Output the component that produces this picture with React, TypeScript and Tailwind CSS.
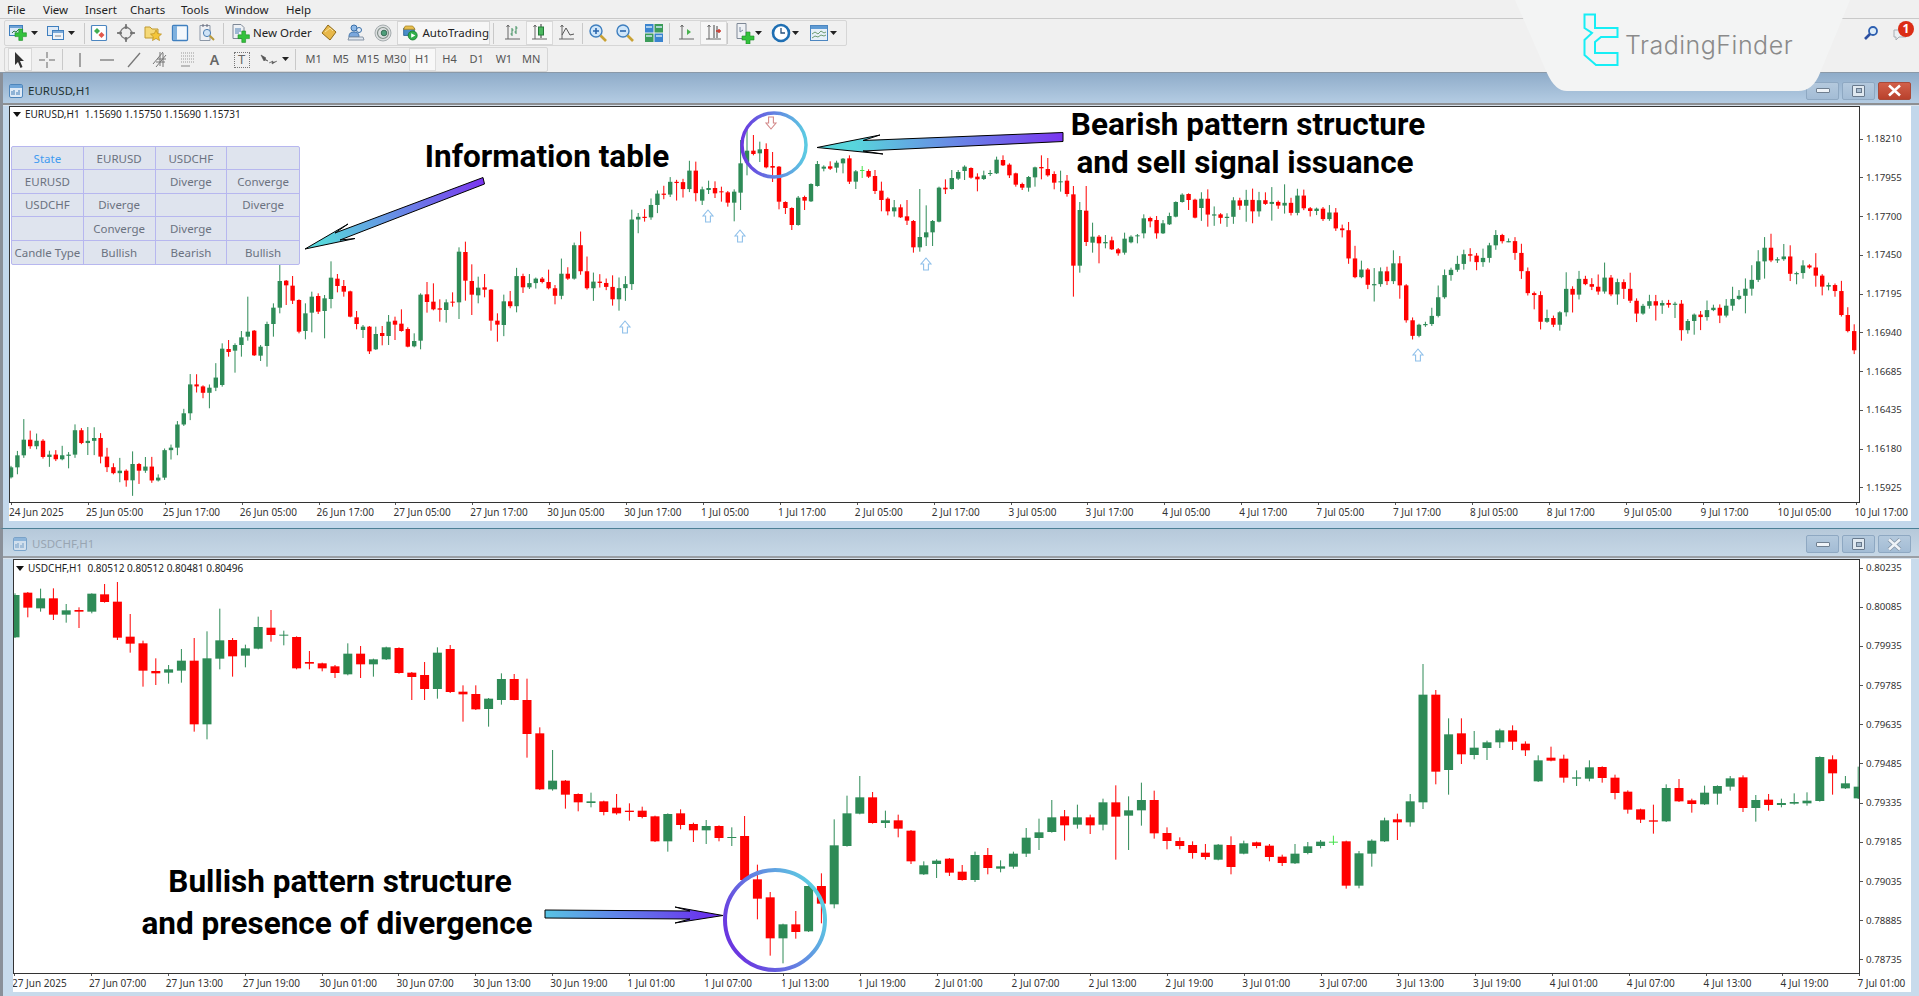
import React from "react";

type C = [number, number, number, number, number];
const RED = "#ff0000", GRN = "#2e8b57", LIM = "#44e04a";

// ---------- bottom chart candles (t, bodyTop, bodyBot, wickTop, wickBot) ----------
const b1: C[] = [[1,75,202,70,204],[0,68,113,66,142],[1,85,115,56,125],[0,85,134,55,150],[1,121,134,102,158],[0,120,125,112,174],[1,71,125,70,130],[0,73,96,42,98],[0,95,203,36,210],[0,200,221,132,248],[0,220,302,212,350],[0,303,310,265,345],[1,298,308,285,341],[1,272,302,237,338],[0,272,463,204,485],[1,265,463,184,508],[1,211,266,116,298],[0,210,259,204,320],[1,235,257,224,292],[1,171,236,140,238],[0,173,195,120,215],[1,194,197,182,226],[0,201,295,199,298],[0,276,281,243,298],[0,280,295,278,304],[0,289,309,285,324],[1,251,313,220,316],[0,251,283,228,324],[1,268,283,266,320],[1,232,268,230,270],[0,234,309,232,311],[0,308,321,306,390],[0,315,357,276,390],[1,248,357,232,386],[0,237,366,225,369],[0,365,373,346,455],[0,372,418,346,420],[1,386,417,384,470],[1,327,390,310,404],[0,327,390,312,391],[0,390,492,326,563],[0,490,658,472,660],[1,632,658,540,662],[0,632,674,630,716],[0,672,697,670,724],[1,694,699,668,712],[0,694,726,692,736],[0,713,730,672,734],[0,722,726,700,752],[0,722,741,710,745]];
const b2: C[] = [[0,529,604,527,606],[1,522,604,520,635],[0,520,555,508,568],[0,552,571,548,606],[1,558,571,540,612],[0,558,594,556,604],[1,591,594,562,618],[0,588,720,528,722],[0,718,776,674,838],[0,772,895,756,947],[1,853,895,851,970],[0,853,876,813,896],[1,738,874,736,876],[0,738,791,700,850],[1,616,793,538,805],[1,520,618,467,620],[1,472,521,408,523],[0,472,549,456,551],[1,541,549,512,564],[0,541,566,524,592],[0,572,664,570,672],[1,676,703,664,705],[1,662,672,658,714],[0,656,698,654,708],[0,695,720,675,722],[1,645,720,635,726],[0,645,684,624,703],[1,679,686,661,697],[1,641,680,635,686],[1,593,641,564,651],[1,577,594,536,630],[1,532,576,480,578],[0,529,556,510,602],[1,532,554,494,566],[0,532,556,524,582],[1,487,554,476,571],[0,487,530,436,659],[1,511,527,469,630],[1,480,511,428,557],[0,480,580,452,596],[0,579,603,562,628],[0,603,618,592,628],[0,615,639,604,656],[0,638,651,612,659],[1,614,659,612,661],[0,615,681,589,703],[1,610,641,602,643],[0,607,618,605,625],[0,617,651,612,664],[0,650,669,644,678],[1,641,670,612,672],[1,619,639,606,643],[1,605,618,600,625],[2,605,607,587,615],[0,604,737,602,746],[1,640,737,633,745],[1,602,641,598,680],[1,541,604,533,606],[0,538,547,521,600],[1,484,547,462,560],[1,164,487,72,507],[0,164,395,150,433],[1,283,390,235,464],[0,280,343,235,372],[1,323,345,273,358],[1,307,324,302,360],[1,271,307,266,324],[0,271,305,256,330],[0,311,331,304,348],[1,361,424,346,426],[0,353,362,320,364],[0,356,413,344,428],[1,412,416,391,438],[1,382,416,361,424],[0,381,414,379,428],[0,413,459,404,478],[0,455,509,451,521],[0,508,539,506,549],[0,541,545,494,581],[1,444,544,433,546],[0,444,484,417,486],[0,481,492,476,518],[1,458,493,437,495],[1,438,461,436,494],[1,415,440,408,452],[0,412,504,406,516],[1,480,504,465,545],[0,479,495,462,512],[1,489,495,476,502],[1,486,491,460,494],[1,482,490,457,497],[1,351,483,349,485],[0,358,400,346,464],[1,430,445,408,447],[1,440,475,380,477]];

// ---------- top chart candles ----------
const t1: C[] = [[1,656,765,640,770],[0,657,666,630,680],[1,645,662,640,728],[1,622,645,603,680],[1,605,620,500,632],[0,602,676,600,678],[1,650,677,645,693],[1,582,648,575,710],[1,533,582,520,620],[1,453,533,405,550],[0,452,466,450,525],[0,467,512,438,522],[0,510,605,508,610],[1,550,603,520,628],[1,500,548,485,607],[0,498,545,490,552],[1,505,543,495,625],[1,443,507,394,535],[0,446,468,432,487],[0,468,485,450,500],[0,484,560,482,562],[0,562,582,543,598],[1,590,600,585,624],[0,590,664,588,672],[1,612,658,590,660],[0,609,618,588,646],[1,575,618,555,645],[0,572,584,560,630],[0,581,603,538,605],[0,597,650,592,652],[1,633,649,610,652],[1,494,632,490,658],[0,493,516,456,548],[0,515,538,460,541],[0,535,539,508,575],[1,517,540,508,578],[0,515,518,487,530],[1,365,517,352,567],[0,366,452,335,512],[0,453,494,403,555],[1,473,496,440,520],[0,472,479,432,502],[0,479,572,477,602],[0,572,584,550,635]];
const t2: C[] = [[1,298,332,290,345],[1,294,300,272,312],[0,294,310,274,324],[0,304,307,290,335],[0,307,338,303,350],[1,305,338,298,394],[1,220,308,150,360],[1,182,218,120,256],[0,182,192,135,196],[1,178,190,155,216],[0,177,232,160,235],[0,228,233,186,276],[0,230,335,228,358],[0,336,354,334,372],[0,354,405,352,420],[1,323,405,318,407],[0,321,332,317,360],[1,282,334,280,336],[1,222,288,213,290],[1,230,236,226,244],[0,229,236,214,240],[1,218,233,212,248],[1,206,220,204,250],[0,205,275,196,282],[1,244,275,240,297],[2,240,242,228,264],[0,243,260,238,264],[0,258,303,240,312],[0,302,330,275,364],[0,326,364,322,376],[1,352,364,330,380],[0,352,382,343,384],[0,379,392,330,405],[0,393,472,390,488],[1,441,472,297,485],[1,427,442,346,468],[1,393,427,390,468],[1,293,395,290,397],[0,293,298,268,312],[1,264,297,240,299],[1,246,266,240,270],[1,230,243,226,270],[0,234,263,232,266],[0,260,268,250,304],[1,256,267,242,270],[1,249,252,240,258],[1,209,250,200,252],[0,210,226,196,228],[0,224,256,220,264],[0,250,284,248,290],[0,282,293,278,300],[1,261,293,258,305],[1,232,262,230,290],[0,231,235,196,268],[0,237,256,204,260],[0,252,278,244,298],[1,274,276,242,305],[0,272,312,255,320],[0,313,527,288,620],[1,360,527,336,548],[0,362,456,288,468],[1,440,458,398,488],[0,440,460,435,520],[1,456,460,435,475],[0,451,478,440,480],[0,478,490,474,497],[1,446,488,428,494],[1,440,457,436,460],[1,436,438,432,460],[1,385,430,373,445],[0,384,394,380,412],[0,390,430,378,446],[1,400,430,390,432],[1,378,403,368,405],[1,336,380,334,382],[1,314,336,310,338],[0,312,330,310,360],[0,329,383,326,385]];

type K = [number, number];
function gen(from: number, to: number, keys: K[], seed: number, startOpen?: number) {
  const out: { n: number; c: C }[] = [];
  let s = seed;
  const rnd = () => { s = (s * 16807) % 2147483647; return s / 2147483647; };
  const at = (x: number) => {
    for (let i = 1; i < keys.length; i++) {
      if (x <= keys[i][0] * 1.2239) {
        const a = keys[i - 1], b = keys[i];
        const f = (x - a[0] * 1.2239) / ((b[0] - a[0]) * 1.2239);
        return (a[1] + (b[1] - a[1]) * Math.max(0, f)) * 1.2239;
      }
    }
    return keys[keys.length - 1][1] * 1.2239;
  };
  let open = startOpen ?? at(11 + 6.4 * from);
  for (let n = from; n <= to; n++) {
    const close = at(11 + 6.4 * n) + (rnd() - 0.5) * 20;
    const top = Math.min(open, close), bot = Math.max(open, close);
    const up = close < open;
    const c: C = [up ? 1 : 0, top, Math.max(bot, top + 1.2), top - rnd() * rnd() * 20 - 1, bot + rnd() * rnd() * 20 + 1];
    out.push({ n, c });
    open = close;
  }
  return out;
}

const k0: K[] = [[9,390],[16,358],[25,360],[40,378],[52,380],[60,360],[70,355],[80,370],[95,385],[110,385],[125,392],[135,375],[145,350],[155,315],[170,318],[177,315]];
const k1: K[] = [[410,258],[420,235],[430,225],[440,235],[450,240],[465,225],[470,205],[478,235],[490,235],[500,238],[510,245],[516,180],[525,175],[535,165],[550,155],[565,145],[570,155]];
const k2: K[] = [[981,170],[1000,170],[1020,165],[1040,168],[1060,165],[1075,175],[1095,180],[1105,215],[1115,232],[1130,225],[1140,215],[1150,270],[1160,265],[1175,250],[1185,215],[1200,210],[1215,210],[1228,190],[1240,215],[1250,235],[1262,270],[1272,255],[1282,235],[1300,232],[1320,235],[1335,255],[1350,240],[1365,250],[1378,270],[1395,255],[1415,245],[1435,225],[1442,208],[1460,215],[1480,225],[1495,228],[1502,250],[1510,265],[1516,300]];

function Candle({ x, w, c }: { x: number; w: number; c: C }) {
  const col = c[0] === 0 ? RED : c[0] === 1 ? GRN : LIM;
  return (
    <g>
      <line x1={x} x2={x} y1={c[3]} y2={c[4]} stroke={col} strokeWidth={1} />
      <rect x={x - w / 2} y={c[1]} width={w} height={Math.max(c[2] - c[1], 1)} fill={col} />
    </g>
  );
}

const shift = (a: C[], off: number): C[] => a.map(c => [c[0], off + c[1] / 3, off + c[2] / 3, off + c[3] / 3, off + c[4] / 3]);

function TopCandles() {
  const x = (n: number) => 11 + 6.4 * n;
  const all: { n: number; c: C }[] = [
    ...gen(0, 32, k0, 77),
    ...shift(t1, 130).map((c, i) => ({ n: 33 + i, c })),
    ...gen(77, 107, k1, 991, 325),
    ...shift(t2, 90).map((c, i) => ({ n: 108 + i, c })),
    ...gen(186, 288, k2, 4242, 208),
  ];
  return <>{all.map(o => <Candle key={o.n} x={x(o.n)} w={4.4} c={o.c} />)}</>;
}
function BottomCandles() {
  const x = (n: number) => 15 + 12.8 * n;
  const all = [...shift(b1, 570), ...shift(b2, 640)];
  return <>{all.map((c, i) => <Candle key={i} x={x(i)} w={9} c={c} />)}</>;
}

const UpA = ({ x, y }: { x: number; y: number }) => (
  <path d={`M${x} ${y - 6}L${x + 5} ${y}H${x + 2.4}V${y + 6}H${x - 2.4}V${y}H${x - 5}Z`} fill="#fff" stroke="#8fc0ea" strokeWidth={1.1} />
);
const DnA = ({ x, y }: { x: number; y: number }) => (
  <path d={`M${x} ${y + 6}L${x + 5} ${y}H${x + 2.4}V${y - 6}H${x - 2.4}V${y}H${x - 5}Z`} fill="#fff" stroke="#d48a8a" strokeWidth={1.1} />
);

// ---------- toolbar icons ----------
const S = ({ children, w = 20, h = 20 }: { children: React.ReactNode; w?: number; h?: number }) => (
  <svg width={w} height={h} viewBox={`0 0 ${w} ${h}`}>{children}</svg>
);
const Plus = ({ x, y, s = 4 }: { x: number; y: number; s?: number }) => (
  <path d={`M${x + s} ${y}h${s}v${s}h${s}v${s}h-${s}v${s}h-${s}v-${s}h-${s}v-${s}h${s}z`} fill="#33c23c" stroke="#1c8c25" strokeWidth={0.6} />
);
const Dd = () => (
  <svg width="8" height="5" viewBox="0 0 8 5"><path d="M0 0h7L3.500 4z" fill="#222" /></svg>
);
const Axes = ({ c = "#666" }: { c?: string }) => (
  <path d="M5 2v14M2 16h15M5 2l-1.500 2M5 2l1.500 2" fill="none" stroke={c} strokeWidth={1} />
);
const IcoNew = () => <S><rect x="1.500" y="2.500" width="13" height="10" fill="#d9e8f7" stroke="#3f7fbf" /><rect x="2" y="3" width="12" height="2" fill="#6fa3d6" /><path d="M4 10l2-2 2 1 3-3" fill="none" stroke="#2e7d46" /><Plus x={7} y={6} s={3.800} /></S>;
const IcoProfile = () => <S><rect x="1.500" y="3.500" width="11" height="9" fill="#dfeaf6" stroke="#3f7fbf" /><rect x="6.500" y="7.500" width="11" height="9" fill="#eef4fb" stroke="#3f7fbf" /><rect x="7" y="8" width="10" height="2" fill="#7aa9d8" /><path d="M9 13h6" stroke="#888" /></S>;
const IcoMarket = () => <S><rect x="2.500" y="2.500" width="15" height="15" rx="1" fill="#fff" stroke="#4c86c0" strokeWidth="1.200" /><path d="M8 5l3 3-3 3-3-3z" fill="#3fae52" /><path d="M12.500 9l3 3-3 3-3-3z" fill="#e2584c" /></S>;
const IcoCompass = () => <S><circle cx="10" cy="10" r="5.500" fill="#eee" stroke="#777" strokeWidth="1.300" /><path d="M10 1v5M10 14v5M1 10h5M14 10h5" stroke="#666" strokeWidth="1.400" /><path d="M10 1.500l2 3h-4zM10 18.500l2-3h-4zM1.500 10l3-2v4zM18.500 10l-3-2v4z" fill="#777" /></S>;
const IcoFolder = () => <S><path d="M2 4h5l2 2h6v9H2z" fill="#f5d978" stroke="#c09a30" /><path d="M13 7l1.700 3.600 3.800.5-2.800 2.600.8 3.800-3.500-2-3.500 2 .8-3.800-2.800-2.600 3.800-.5z" fill="#f4c63a" stroke="#b98c1c" strokeWidth=".7" /></S>;
const IcoNav = () => <S><rect x="2.500" y="2.500" width="15" height="15" rx="1" fill="#f4f8fc" stroke="#3f7fbf" strokeWidth="1.300" /><rect x="3" y="3" width="4" height="14" fill="#7eb0de" /></S>;
const IcoTester = () => <S><path d="M3 2.500h10v15H3z" fill="#eef0f4" stroke="#8c97a6" /><path d="M6 1v3M10 1v3" stroke="#667" /><circle cx="10" cy="10" r="3.600" fill="#cfe3f6" stroke="#4d7fb2" /><path d="M12.800 12.800L17 17" stroke="#b89a3c" strokeWidth="2" /></S>;
const IcoOrder = () => <S><path d="M3 1.500h8l3 3v11H3z" fill="#eef1f5" stroke="#7e8896" /><path d="M5 6h6M5 8h6M5 10h4" stroke="#4d7fb2" /><Plus x={8} y={8} s={3.800} /></S>;
const IcoGold = () => <S><path d="M9 2l8 7-6 8-8-7z" fill="#e8b84a" stroke="#8f6a18" /><path d="M6 9l5-4 3 3" fill="none" stroke="#f7e19a" /></S>;
const IcoPeople = () => <S><circle cx="8" cy="5" r="3" fill="#8db9e8" stroke="#3a6fa8" /><path d="M3 14c0-4 2-5 5-5s5 1 5 5z" fill="#7aa7dc" stroke="#3a6fa8" /><circle cx="13" cy="7" r="2.500" fill="#e4eef8" stroke="#3a6fa8" /><path d="M3 14h14l1 3H2z" fill="#dfe6ee" stroke="#8795a6" /></S>;
const IcoSignal = () => <S><circle cx="10" cy="10" r="8" fill="#dcdfe0" stroke="#a5acae" /><circle cx="10" cy="10" r="5.500" fill="none" stroke="#83908a" strokeWidth="1.200" /><circle cx="11" cy="10" r="2.800" fill="#4d9e7a" stroke="#3a6f58" /></S>;
const IcoAuto = () => <S><path d="M2 4h13v9H2z" fill="#4a8dc9" stroke="#2a5f92" /><path d="M4 1.500h9l3 4H2z" fill="#e9c04f" stroke="#a98626" /><circle cx="13" cy="13" r="5.500" fill="#2fb04a" stroke="#1a7a2e" /><path d="M11.200 10.200l5 2.800-5 2.800z" fill="#fff" /></S>;
const IcoBars = () => <S><Axes /><path d="M9 5v8M7.500 11H9M9 7h1.500M13 3v8M11.500 9H13M13 5h1.500" stroke="#3d8e5c" fill="none" /></S>;
const IcoCandle = () => <S><Axes /><path d="M11 1v14" stroke="#333" /><rect x="8.500" y="4" width="5" height="8" fill="#4cb860" stroke="#267a3a" /></S>;
const IcoLine = () => <S><Axes /><path d="M5 12l4-7 4 7 4-1" fill="none" stroke="#555" /></S>;
const IcoZoom = ({ plus }: { plus?: boolean }) => <S><circle cx="8" cy="8" r="6" fill="#cfe6fa" stroke="#3f7fbf" strokeWidth="1.400" /><path d={plus ? "M5 8h6M8 5v6" : "M5 8h6"} stroke="#2a66ad" strokeWidth="1.600" /><path d="M12.500 12.500L18 18" stroke="#c9a234" strokeWidth="2.600" /></S>;
const IcoTile = () => <S><rect x="1" y="1" width="8.500" height="8.500" fill="#3b84cf" /><rect x="10.500" y="1" width="8.500" height="8.500" fill="#3c9c5a" /><rect x="1" y="10.500" width="8.500" height="8.500" fill="#3c9c5a" /><rect x="10.500" y="10.500" width="8.500" height="8.500" fill="#3b84cf" /><path d="M2 4h6M12 4h6M2 13h6M12 13h6" stroke="#cfe6f8" strokeWidth="1.500" /></S>;
const IcoShift = () => <S><Axes /><path d="M10 6l4 3-4 3z" fill="#49b24e" /></S>;
const IcoScroll = () => <S><Axes /><path d="M10 2v13M13 3v12" stroke="#444" /><path d="M12 8h5M15 6v4" stroke="#c8352b" strokeWidth="1.400" /></S>;
const IcoInd = () => <S w={22} h={22}><path d="M4 1.500h9v15H4z" fill="#eef1f5" stroke="#7e8896" /><path d="M7 5v5l3-2" fill="none" stroke="#7a8aa0" /><Plus x={9} y={10} s={4} /></S>;
const IcoClock = () => <S><circle cx="10" cy="10" r="8" fill="#fff" stroke="#1f6fb3" strokeWidth="2.600" /><path d="M10 5v5h4" fill="none" stroke="#28527e" strokeWidth="1.300" /></S>;
const IcoTpl = () => <S><rect x="1.500" y="2.500" width="17" height="15" fill="#e7f0f9" stroke="#4c86c0" /><rect x="2" y="3" width="16" height="3" fill="#5f9bd4" /><path d="M3 11l3-2 3 2 3-3 3 2 2-1M3 15l3-2 3 1 3-2 3 1 2-1" fill="none" stroke="#6e9c72" /></S>;

const IcoCursor = () => <svg width="14" height="18" viewBox="0 0 14 18"><path d="M2 1l9 9H7l2.500 6-2 1-2.500-6-3 3z" fill="#333" /></svg>;
const IcoCross = () => <S><path d="M10 2v6M10 12v6M2 10h6M12 10h6" stroke="#666" /></S>;
const IcoV = () => <S><path d="M10 3v14" stroke="#777" strokeWidth="1.300" /></S>;
const IcoH = () => <S><path d="M3 10h14" stroke="#777" strokeWidth="1.300" /></S>;
const IcoT = () => <S><path d="M4 17L16 3" stroke="#777" strokeWidth="1.300" /></S>;
const IcoChan = () => <S><path d="M2 14L12 2M5 17L15 5M9 2v14M12 3v14M6 9h9M5 12h9" stroke="#777" fill="none" /></S>;
const IcoFibo = () => <S><path d="M3 3h14M3 6h14M3 9h14M3 12h14" stroke="#999" strokeDasharray="1 1" /><path d="M3 16h9" stroke="#888" /></S>;

// ---------- shared pieces ----------
const Btn = ({ children, w = "w-[27px]", on }: { children: React.ReactNode; w?: string; on?: boolean }) => (
  <div className={`${w} h-full shrink-0 flex items-center justify-center ${on ? "bg-[#f7f7f7] border border-[#d9d9d9]" : ""}`}>{children}</div>
);
const Sep = ({ ml = "" }: { ml?: string }) => <div className={`w-px h-[21px] bg-[#c9c9c9] shrink-0 ${ml}`} />;
const DdBtn = ({ w = "w-[8px]" }: { w?: string }) => <div className={`${w} shrink-0 flex justify-center`}><Dd /></div>;

const TimeAxis = ({ labels, pad }: { labels: string[]; pad: string }) => (
  <div className={`flex h-[18px] bg-white ${pad} overflow-hidden`}>
    {labels.map((l, i) => (
      <div key={i} className="w-[76.900px] shrink-0 flex flex-col items-start">
        <div className="w-px h-[2px] bg-[#555]" />
        <span className="-ml-[2px] text-[10px] leading-[14px] whitespace-nowrap text-[#333]">{l}</span>
      </div>
    ))}
  </div>
);
const PriceAxis = ({ labels, pad }: { labels: string[]; pad: string }) => (
  <div className={`w-[51px] flex flex-col justify-between ${pad}`}>
    {labels.map(l => (
      <div key={l} className="h-[14px] flex items-center">
        <div className="w-[3px] h-px bg-[#555] mr-[3px]" />
        <span className="text-[9.700px] leading-[14px] text-[#333]">{l}</span>
      </div>
    ))}
  </div>
);
const WinIcon = ({ faded }: { faded?: boolean }) => (
  <svg width="14" height="14" viewBox="0 0 14 14" className={faded ? "opacity-60" : ""}>
    <rect x="0.500" y="0.500" width="13" height="13" rx="1.500" fill="#dfeaf6" stroke="#4f86bb" />
    <rect x="1" y="1" width="12" height="3" fill="#6fa5d8" />
    <path d="M3 7v4M5 6v5M8 8v3M10 6v5" stroke="#4f86bb" strokeWidth="1.100" />
  </svg>
);
const WinBtns = ({ active }: { active?: boolean }) => (
  <div className="flex gap-[3px] h-[18px]">
    <div className="w-[33px] border border-[#8ea8c2] rounded-[2px] bg-gradient-to-b from-[#b4c9dd] to-[#a3bcd5] flex items-center justify-center">
      <div className="w-[14px] h-[5px] bg-[#eef3f8] border border-[#6f7f90] rounded-[1px]" />
    </div>
    <div className="w-[33px] border border-[#8ea8c2] rounded-[2px] bg-gradient-to-b from-[#b4c9dd] to-[#a3bcd5] flex items-center justify-center">
      <div className="w-[13px] h-[12px] bg-[#dfe8f0] border border-[#68798c] rounded-[1px] flex items-center justify-center">
        <div className="w-[6px] h-[5px] bg-[#a9bdd0] border border-[#68798c]" />
      </div>
    </div>
    <div className={`w-[33px] rounded-[2px] flex items-center justify-center border ${active ? "border-[#a94a3a] bg-gradient-to-b from-[#d2604a] to-[#b9412c]" : "border-[#8ea8c2] bg-gradient-to-b from-[#b4c9dd] to-[#a3bcd5]"}`}>
      <svg width="15" height="13" viewBox="0 0 15 13">
        {!active && <path d="M2 1.500L13 11.500M13 1.500L2 11.500" stroke="#7f90a2" strokeWidth="4" fill="none" />}
        <path d="M2 1.500L13 11.500M13 1.500L2 11.500" stroke={active ? "#fff" : "#eef3f8"} strokeWidth="2.600" />
      </svg>
    </div>
  </div>
);
const Legend = ({ text, cls }: { text: string; cls: string }) => (
  <div className={`absolute flex items-center ${cls}`}>
    <svg width="8" height="5" viewBox="0 0 8 5" className="mr-[4px]"><path d="M0 0h8L4 5z" fill="#111" /></svg>
    <span className="text-[10px] leading-[12px] whitespace-pre text-[#222]">{text}</span>
  </div>
);
const Note = ({ cls, children }: { cls: string; children: React.ReactNode }) => (
  <div className={`absolute -translate-x-1/2 -translate-y-1/2 whitespace-nowrap [font-family:'Roboto',sans-serif] font-bold text-[31.500px] leading-none text-black ${cls}`}>{children}</div>
);

const tbl = [
  ["State", "EURUSD", "USDCHF", ""],
  ["EURUSD", "", "Diverge", "Converge"],
  ["USDCHF", "Diverge", "", "Diverge"],
  ["", "Converge", "Diverge", ""],
  ["Candle Type", "Bullish", "Bearish", "Bullish"],
];

const topTimes = ["24 Jun 2025","25 Jun 05:00","25 Jun 17:00","26 Jun 05:00","26 Jun 17:00","27 Jun 05:00","27 Jun 17:00","30 Jun 05:00","30 Jun 17:00","1 Jul 05:00","1 Jul 17:00","2 Jul 05:00","2 Jul 17:00","3 Jul 05:00","3 Jul 17:00","4 Jul 05:00","4 Jul 17:00","7 Jul 05:00","7 Jul 17:00","8 Jul 05:00","8 Jul 17:00","9 Jul 05:00","9 Jul 17:00","10 Jul 05:00","10 Jul 17:00"];
const botTimes = ["27 Jun 2025","27 Jun 07:00","27 Jun 13:00","27 Jun 19:00","30 Jun 01:00","30 Jun 07:00","30 Jun 13:00","30 Jun 19:00","1 Jul 01:00","1 Jul 07:00","1 Jul 13:00","1 Jul 19:00","2 Jul 01:00","2 Jul 07:00","2 Jul 13:00","2 Jul 19:00","3 Jul 01:00","3 Jul 07:00","3 Jul 13:00","3 Jul 19:00","4 Jul 01:00","4 Jul 07:00","4 Jul 13:00","4 Jul 19:00","7 Jul 01:00"];
const topPrices = ["1.18210","1.17955","1.17700","1.17450","1.17195","1.16940","1.16685","1.16435","1.16180","1.15925"];
const botPrices = ["0.80235","0.80085","0.79935","0.79785","0.79635","0.79485","0.79335","0.79185","0.79035","0.78885","0.78735"];

export default function App() {
  return (
    <div className="relative w-[1919px] h-[996px] overflow-hidden bg-[#f0f0f0] [font-family:'Noto_Sans',sans-serif]">
      {/* menu */}
      <div className="h-[19px] flex items-center pt-px text-[11.500px] text-[#222] border-b border-[#c9c9c9]">
        <span className="ml-[7px] w-[36px]">File</span>
        <span className="w-[42px]">View</span>
        <span className="w-[45px]">Insert</span>
        <span className="w-[51px]">Charts</span>
        <span className="w-[44px]">Tools</span>
        <span className="w-[61px]">Window</span>
        <span>Help</span>
      </div>
      {/* toolbar 1 */}
      <div className="h-[28px] flex items-start pl-[4px] pt-px">
        <div className="w-[843px] h-[26px] flex items-center border border-[#d6d6d6] rounded-[2px] text-[11.500px] text-[#222]">
          <Btn w="w-[26px]"><IcoNew /></Btn><DdBtn />
          <div className="w-[6px]" />
          <Btn w="w-[22px]"><IcoProfile /></Btn><DdBtn w="w-[10px]" />
          <Sep ml="ml-[7px]" />
          <Btn><IcoMarket /></Btn><Btn><IcoCompass /></Btn><Btn><IcoFolder /></Btn><Btn><IcoNav /></Btn><Btn><IcoTester /></Btn>
          <Sep ml="ml-[3px]" />
          <div className="w-[91px] h-full shrink-0 flex items-center pl-[6px] gap-[3px]"><IcoOrder /><span className="whitespace-nowrap">New Order</span></div>
          <Btn><IcoGold /></Btn><Btn><IcoPeople /></Btn><Btn><IcoSignal /></Btn>
          <div className="w-[93px] h-full ml-px shrink-0 flex items-center gap-[4px] pl-[4px] bg-[#f6f6f6] border border-[#d6d6d6]"><IcoAuto /><span className="whitespace-nowrap">AutoTrading</span></div>
          <Sep ml="ml-[3px]" />
          <div className="w-[5px]" />
          <Btn><IcoBars /></Btn><Btn on><IcoCandle /></Btn><Btn><IcoLine /></Btn>
          <Sep ml="ml-[2px]" />
          <div className="w-px" />
          <Btn><IcoZoom plus /></Btn><Btn><IcoZoom /></Btn>
          <div className="w-[2px]" />
          <Btn><IcoTile /></Btn>
          <Sep ml="ml-[2px]" />
          <div className="w-[3px]" />
          <Btn><IcoShift /></Btn><Btn on><IcoScroll /></Btn>
          <Sep />
          <div className="w-[5px]" />
          <Btn w="w-[22px]"><IcoInd /></Btn><DdBtn />
          <div className="w-[7px]" />
          <Btn w="w-[22px]"><IcoClock /></Btn><DdBtn />
          <div className="w-[8px]" />
          <Btn w="w-[22px]"><IcoTpl /></Btn><DdBtn />
        </div>
        <div className="ml-auto mr-[5px] flex items-center gap-[13px] pt-[3px]">
          <svg width="16" height="16" viewBox="0 0 16 16"><circle cx="10" cy="6" r="4" fill="#dcebf8" stroke="#2d5fb0" strokeWidth="1.800" /><path d="M7 9L2 14" stroke="#2d4fa0" strokeWidth="2.600" /></svg>
          <div className="relative w-[22px] h-[20px]">
            <svg width="16" height="14" viewBox="0 0 16 14" className="absolute left-0 top-[5px]"><path d="M2 2h12v7H7l-3 3V9H2z" fill="#eceff2" stroke="#a8adb3" /></svg>
            <div className="absolute right-0 top-[-2px] w-[16px] h-[16px] rounded-full bg-[#db2c15] text-white text-[12px] font-bold leading-[16px] text-center">1</div>
          </div>
        </div>
      </div>
      {/* toolbar 2 */}
      <div className="h-[26px] flex items-center pl-[4px] border-b border-[#8a99a8]">
        <div className="w-[544px] h-[25px] flex items-center border border-[#d6d6d6] rounded-[2px] text-[11px] text-[#555]">
          <div className="w-[3px]" />
          <Btn w="w-[24px]" on><IcoCursor /></Btn>
          <div className="w-[3px]" />
          <Btn w="w-[24px]"><IcoCross /></Btn>
          <Sep ml="ml-[3px]" />
          <div className="w-[3px]" />
          <Btn><IcoV /></Btn><Btn><IcoH /></Btn><Btn><IcoT /></Btn><Btn><IcoChan /></Btn><Btn><IcoFibo /></Btn>
          <Btn><span className="text-[14px] font-semibold text-[#666]">A</span></Btn>
          <Btn><span className="w-[16px] h-[16px] border border-dotted border-[#777] flex items-center justify-center text-[13px] text-[#666]">T</span></Btn>
          <Btn>
            <svg width="18" height="14" viewBox="0 0 18 14"><path d="M1 2l5 3-1 1 3 2-3-1-1 1zM17 8l-5 3 1-3-4 2" fill="#555" stroke="#555" strokeWidth=".6" /></svg>
          </Btn>
          <DdBtn />
          <Sep ml="ml-[5px]" />
          <div className="w-[4px]" />
          {["M1","M5","M15","M30","H1","H4","D1","W1","MN"].map(t => (
            <div key={t} className={`w-[27.200px] h-full shrink-0 flex items-center justify-center ${t === "H1" ? "bg-[#f8f8f8] border border-[#dcdcdc]" : ""}`}>{t}</div>
          ))}
        </div>
      </div>

      {/* top chart window */}
      <div className="h-[456px] flex flex-col border-l-[3px] border-l-[#8a9099] bg-[#c2d7eb] border-b border-b-[#4b7f95]">
        <div className="h-[30px] shrink-0 pt-[5px] flex items-center bg-gradient-to-b from-[#8facc9] to-[#b4cce3] pl-[6px] pr-[8px] text-[11.500px] text-[#233]">
          <WinIcon /><span className="ml-[5px]">EURUSD,H1</span>
          <div className="flex-1" /><WinBtns active />
        </div>
        <div className="h-[2px] shrink-0 bg-[#8d8f92]" />
        <div className="h-px shrink-0 bg-[#d8e2ec]" />
        <div className="ml-[6px] w-[1902px] bg-white">
          <div className="flex">
            <div className="relative w-[1851px] h-[397px] border border-[#333] shrink-0 overflow-hidden">
              <svg width="1849" height="395" viewBox="10 107 1849 395" className="block">
                <defs>
                  <linearGradient id="a1" gradientUnits="userSpaceOnUse" x1="483" y1="180" x2="305" y2="249"><stop offset="0" stopColor="#7a35f0" /><stop offset="0.900" stopColor="#58d6dc" /></linearGradient>
                  <linearGradient id="a2" gradientUnits="userSpaceOnUse" x1="1063" y1="137" x2="817" y2="147"><stop offset="0" stopColor="#7a35f0" /><stop offset="0.850" stopColor="#58d6dc" /></linearGradient>
                  <linearGradient id="c1" x1="0" y1="0.500" x2="1" y2="0.500"><stop offset="0" stopColor="#6a38e0" /><stop offset="1" stopColor="#5ccbe2" /></linearGradient>
                </defs>
                <TopCandles />
                <UpA x={708} y={216} /><UpA x={740} y={236} /><UpA x={926} y={264} /><UpA x={625} y={327} /><UpA x={1418} y={355} /><DnA x={771} y={123} />
                <circle cx="774" cy="145" r="32" fill="none" stroke="url(#c1)" strokeWidth="3.500" />
                <path d="M483 177.500L484.500 184L340 240L355 238.500L305 249L348 224L335 233Z" fill="url(#a1)" stroke="#000" strokeWidth="1" />
                <path d="M1063 132.500V141.500L863 151L883 154L817 147.500L880 135L863 140.500Z" fill="url(#a2)" stroke="#000" strokeWidth="1" />
              </svg>
              <Legend text={"EURUSD,H1  1.15690 1.15750 1.15690 1.15731"} cls="left-[3px] top-px" />
              <div className="absolute left-[1px] top-[39px] w-[289px] h-[119px] grid grid-cols-4 grid-rows-5 border border-[#b7b7ef] rounded-[2px] bg-[#dfe4ee] text-[11.500px] text-[#6b7280]">
                {tbl.flat().map((t, i) => (
                  <div key={i} className={`flex items-center justify-center whitespace-nowrap ${i % 4 < 3 ? "border-r border-[#b7b7ef]" : ""} ${i < 16 ? "border-b border-[#b7b7ef]" : ""} ${i === 0 ? "text-[#3f9bf0]" : ""}`}>{t}</div>
                ))}
              </div>
              <Note cls="left-[537px] top-[50px]">Information table</Note>
              <Note cls="left-[1238px] top-[18px]">Bearish pattern structure</Note>
              <Note cls="left-[1235px] top-[56px]">and sell signal issuance</Note>
            </div>
            <PriceAxis labels={topPrices} pad="pt-[26px] pb-[8px]" />
          </div>
          <TimeAxis labels={topTimes} pad="pl-[2px]" />
        </div>
      </div>

      {/* bottom chart window */}
      <div className="h-[467px] flex flex-col border-l-[3px] border-l-[#8a9099] bg-[#c8dbec]">
        <div className="h-[27px] shrink-0 pt-[3px] flex items-center bg-gradient-to-b from-[#b6c9da] to-[#c6d7e6] pl-[10px] pr-[8px] text-[11.500px] text-[#98a5b2]">
          <WinIcon faded /><span className="ml-[5px]">USDCHF,H1</span>
          <div className="flex-1" /><WinBtns />
        </div>
        <div className="h-[2px] shrink-0 bg-[#9a9fa5]" />
        <div className="h-px shrink-0 bg-[#d8e2ec]" />
        <div className="ml-[10px] w-[1898px] bg-white">
          <div className="flex">
            <div className="relative w-[1847px] h-[415px] border border-[#333] shrink-0 overflow-hidden">
              <svg width="1845" height="413" viewBox="14 560 1845 413" className="block">
                <defs>
                  <linearGradient id="a3" gradientUnits="userSpaceOnUse" x1="545" y1="914" x2="723" y2="915"><stop offset="0" stopColor="#58c4e4" /><stop offset="0.900" stopColor="#6a35ee" /></linearGradient>
                  <linearGradient id="c2" x1="0" y1="0.800" x2="1" y2="0.300"><stop offset="0.100" stopColor="#6a38e0" /><stop offset="0.950" stopColor="#5ccbe2" /></linearGradient>
                </defs>
                <BottomCandles />
                <circle cx="775" cy="920" r="50" fill="none" stroke="url(#c2)" strokeWidth="4" />
                <path d="M545 910V918L690 919L675 923L723 915.500L675 907L690 911Z" fill="url(#a3)" stroke="#000" strokeWidth="1" />
              </svg>
              <Legend text={"USDCHF,H1  0.80512 0.80512 0.80481 0.80496"} cls="left-[2px] top-[2px]" />
              <Note cls="left-[326px] top-[322px]">Bullish pattern structure</Note>
              <Note cls="left-[323px] top-[364px]">and presence of divergence</Note>
            </div>
            <PriceAxis labels={botPrices} pad="pt-[2px] pb-[7px]" />
          </div>
          <TimeAxis labels={botTimes} pad="pl-px" />
        </div>
      </div>

      {/* logo tab */}
      <div className="absolute left-[1515px] top-0 w-[336px] h-[91px]">
        <svg width="336" height="91" viewBox="0 0 336 91" className="absolute inset-0">
          <path d="M0 0L32 73Q40 91 52 91H283Q298 91 305 73L335 0Z" fill="#f3f4f4" />
          <path d="M69.500 14.500H80V28H102.500V37H86L80 42V53H102.500V65H81L69.500 55V40L77 33L69.500 28ZM80 42V53" fill="none" stroke="#16eef5" strokeWidth="2" />
        </svg>
        <span className="absolute left-[110px] top-[29px] [font-family:'Inter',sans-serif] font-light text-[25px] leading-[32px] tracking-[0.5px] text-[#8a8a8a]">TradingFinder</span>
      </div>
    </div>
  );
}
